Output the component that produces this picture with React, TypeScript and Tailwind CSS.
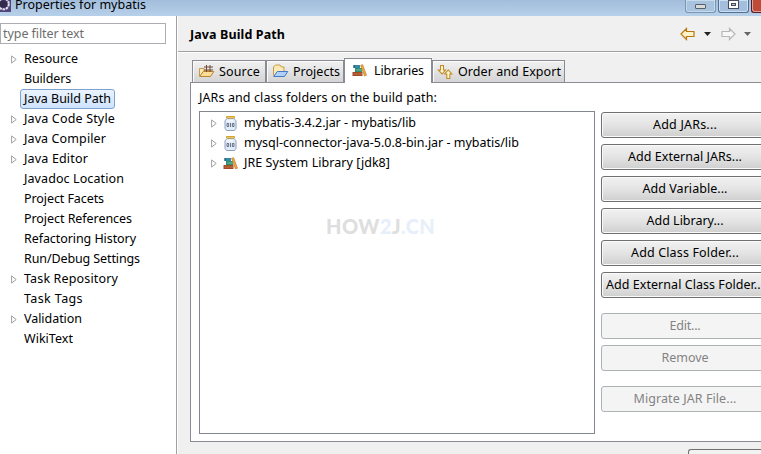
import { useLayoutEffect, useRef, useState } from "react";

function Fit({ text, w, className = "" }: { text: string; w: number; className?: string }) {
  const ref = useRef<HTMLSpanElement>(null);
  const [ls, setLs] = useState(0);
  useLayoutEffect(() => {
    const natural = ref.current!.getBoundingClientRect().width;
    setLs((w - natural) / text.length);
  }, [text, w]);
  return (
    <span ref={ref} className={`inline-block shrink-0 whitespace-pre ${className}`} style={{ letterSpacing: ls }}>
      {text}
    </span>
  );
}

const Expander = () => (
  <svg width="6" height="9" viewBox="0 0 6 9" fill="#fff" stroke="#a0a0a0" className="shrink-0">
    <path d="M.6 .9 5.2 4.5 .6 8.1Z" />
  </svg>
);

const Books = () => (
  <svg width="15" height="13" viewBox="0 0 15 13" className="shrink-0">
    <path d="M1.5 1H8v3H1.5z" fill="#3489a5" /><path d="M1.5 1h1.2v3H1.5z" fill="#225c7b" />
    <path d="M3 4h7v4H3z" fill="#2f8f70" /><path d="M4.5 5.5H10v1H4.5z" fill="#7cc3a0" />
    <path d="M.5 8h10v4H.5z" fill="#a04a27" /><path d="M1.5 9.5H10v1H1.5z" fill="#c87647" />
    <path d="m8.6 1.4 2-.8 3.9 10.6-2 .8z" fill="#f0a63c" stroke="#c07424" strokeWidth=".6" />
  </svg>
);

const Jar = () => (
  <svg width="13" height="16" viewBox="0 0 13 16" className="shrink-0">
    <path d="M3 3.5h7l2 2.3v7.7l-1.5 2h-8L1 13.500V5.800z" fill="#e2ebf8" stroke="#8ea0c0" />
    <path d="M2.500 1.500h8v1.500h-8z" fill="#fbe79c" stroke="#d3a52f" />
    <path d="M3 5.500h6v1H3z" fill="#fff" />
    <path d="M3 8.500h1.600v3H3zM8.400 8.500H10v3H8.400zM6.500 8v4" fill="none" stroke="#4d5871" strokeWidth=".8" />
  </svg>
);

const Folder = ({ source = false }: { source?: boolean }) => (
  <svg width="17" height="16" viewBox="0 0 17 16" className="-mt-[2px] shrink-0">
    <path d={source ? "M1.500 13V5.500H6V8h7" : "M1.500 12.500V4L3.500 2H8l1.500 2H12v4"} fill="#fbeab8" stroke="#c89a45" />
    <path d="m1.700 13.500 3.500-5h10.600l-3.300 5z" fill={source ? "#fbdc98" : "#aed0fa"} stroke={source ? "#bd842e" : "#4878c4"} />
    {source && <path d="M6 4h9M6 7h9M8.500 2v7M12 2v7" stroke="#704a34" />}
  </svg>
);

const Order = () => (
  <svg width="16" height="16" viewBox="0 0 16 16" fill="#fff6cf" stroke="#c18a29" strokeWidth="1.100" className="shrink-0">
    <path d="M3.500 1.500h3V6h2L5 10 1.200 6h2.300z" /><path d="M9.800 14.500h3V10h2L11.300 6 7.600 10h2.200z" />
  </svg>
);

const tree: [string, number, boolean][] = [
  ["Resource", 54, true], ["Builders", 47, false], ["Java Build Path", 87, false],
  ["Java Code Style", 91, true], ["Java Compiler", 82, true], ["Java Editor", 64, true],
  ["Javadoc Location", 100, false], ["Project Facets", 80, false], ["Project References", 108, false],
  ["Refactoring History", 112, false], ["Run/Debug Settings", 116, false], ["Task Repository", 94, true],
  ["Task Tags", 59, false], ["Validation", 58, true], ["WikiText", 49, false],
];

const libs: [string, number, boolean][] = [
  ["mybatis-3.4.2.jar - mybatis/lib", 172, true],
  ["mysql-connector-java-5.0.8-bin.jar - mybatis/lib", 275, true],
  ["JRE System Library [jdk8]", 146, false],
];

const buttons: [string, number, boolean, string][] = [
  ["Add JARs...", 64, true, "mb-[6px]"], ["Add External JARs...", 114, true, "mb-[6px]"],
  ["Add Variable...", 85, true, "mb-[6px]"], ["Add Library...", 77, true, "mb-[6px]"],
  ["Add Class Folder...", 108, true, "mb-[6px]"], ["Add External Class Folder...", 158, true, "mb-[15px]"],
  ["Edit...", 31, false, "mb-[6px]"], ["Remove", 47, false, "mb-[15px]"], ["Migrate JAR File...", 103, false, ""],
];

const tab = "flex h-[22px] items-center border border-b-0 border-[#898c95] bg-linear-to-b from-[#f2f2f2] to-[#d4d4d4] shadow-[inset_1px_1px_0_#fbfbfb]";

export default function App() {
  return (
    <div className="flex h-[454px] w-[761px] flex-col overflow-hidden bg-[#f0f0f0] font-['Noto_Sans',sans-serif] text-[12.5px] leading-[20px] text-black">
      <header className="flex h-4 shrink-0 justify-between overflow-hidden bg-linear-to-b from-[#a2bddb] to-[#b7d0ea]">
        <div className="flex">
          <svg width="11" height="12" viewBox="0 0 11 12" className="mr-1 shrink-0">
            <path d="M0 0h11v12H0z" fill="#51447c" /><circle cx="3.500" cy="4" r="5.300" fill="none" stroke="#e6e2ea" strokeWidth="2" strokeDasharray="2.500 .8" /><circle cx="3.500" cy="4" r="3.800" fill="#352a4c" />
          </svg>
          <Fit text="Properties for mybatis" w={131} className="-mt-[5px]" />
        </div>
        <div className="flex gap-[2px]">
          <div className="flex h-[13px] w-[31px] justify-center rounded-b-[3px] border border-t-0 border-[#7895b5] bg-[#a9c3df] pt-1 shadow-[inset_0_0_0_1px_#c7d9ec]"><i className="h-[5px] w-[11px] rounded-[1px] border border-[#55606e] bg-[#d9d9d9]" /></div>
          <div className="flex h-[13px] w-[31px] justify-center rounded-b-[3px] border border-t-0 border-[#526f91] bg-[#a4bfdd] shadow-[inset_0_0_0_1px_#cbdff2]"><i className="flex h-[9px] w-[11px] items-center justify-center border border-[#484b57] bg-white"><b className="h-[3px] w-[5px] border border-[#484b57] bg-[#b0c6df]" /></i></div>
          <div className="h-[13px] w-[10px] rounded-bl-[3px] border-b border-l border-[#5c1721] bg-[#bd4b37] shadow-[inset_1px_-1px_0_#dda19a]" />
        </div>
      </header>

      <div className="flex min-h-0 flex-1">
        <aside className="w-[177px] shrink-0 border-r border-[#a0a0a0] bg-white pt-[7px]">
          <div className="mb-[5px] h-[21px] w-[166px] border border-[#abadb3] pl-[2px] leading-[19px] text-[#6d6d6d]"><Fit text="type filter text" w={81} /></div>
          {tree.map(([name, w, open]) => (
            <div key={name} className="flex h-5 items-center">
              <span className="ml-[11px] flex w-[9px] items-center">{open && <Expander />}</span>
              <span className={`flex h-5 items-center rounded-[3px] border px-[3px] ${name === "Java Build Path" ? "border-[#7da2ce] bg-linear-to-b from-[#eaf3fd] to-[#cfe3fc]" : "border-transparent"}`}><Fit text={name} w={w} /></span>
            </div>
          ))}
        </aside>

        <main className="flex min-w-0 flex-1 flex-col border-l border-white">
          <div className="flex h-[36px] shrink-0 items-center justify-between border-b border-[#a0a0a0] pr-[9px] pl-[12px]">
            <Fit text="Java Build Path" w={95} className="pt-[3px] font-bold" />
            <svg width="72" height="14" viewBox="0 0 72 14">
              <path d="m1 7 5.500-5.500v3H14v5H6.500v3z" fill="#fff4c8" stroke="#b9780f" strokeWidth="1.200" />
              <path d="M24 5h7l-3.500 4z" fill="#222" />
              <path d="m55 7-5.500-5.500v3H42v5h7.500v3z" fill="#f7f7f7" stroke="#b7b7b7" strokeWidth="1.200" />
              <path d="M64 5h7l-3.500 4z" fill="#666" />
            </svg>
          </div>
          <div className="flex h-[30px] shrink-0 items-end border-t border-white pl-[14px]">
            <div className={`${tab} w-[74px] pl-[5px]`}><Folder source /><Fit text="Source" w={41} className="ml-1" /></div>
            <div className={`${tab} w-[78px] pl-[5px]`}><Folder /><Fit text="Projects" w={47} className="ml-1" /></div>
            <div className="z-1 -mb-px flex h-[25px] w-[88px] items-center border border-b-0 border-[#898c95] bg-white pb-[1px] pl-[7px]"><Books /><Fit text="Libraries" w={50} className="ml-[7px]" /></div>
            <div className={`${tab} w-[133px] pl-[4px]`}><Order /><Fit text="Order and Export" w={103} className="ml-[5px]" /></div>
          </div>
          <section className="ml-[12px] flex h-[360px] shrink-0 flex-col border-y border-l border-[#898c95] bg-white pl-2">
            <div className="h-[28px] shrink-0 pt-[5px]"><Fit text="JARs and class folders on the build path:" w={238} /></div>
            <div className="flex">
              <div className="h-[323px] w-[396px] shrink-0 border border-[#828790] pt-[1px]">
                {libs.map(([name, w, jar]) => (
                  <div key={name} className="flex h-5 items-center pl-[11px]">
                    <Expander />
                    <span className="mr-[6px] ml-[6px] flex w-[15px] justify-center">{jar ? <Jar /> : <Books />}</span>
                    <Fit text={name} w={w} />
                  </div>
                ))}
                <div className="mt-[33px] ml-[126px] flex h-[40px] items-center font-['Lato',sans-serif] text-[20px] font-black text-[#dedede]">
                  <Fit text="HOW" w={54} /><Fit text="2" w={12} className="text-[#e7f0fa]" /><Fit text="J" w={9} /><Fit text=".CN" w={34} className="text-[#e7f0fa]" />
                </div>
              </div>
              <div className="mt-px ml-[6px]">
                {buttons.map(([name, w, on, gap]) => (
                  <div key={name} className={`flex h-[26px] w-[168px] items-center justify-center rounded-[3px] border ${gap} ${on ? "border-[#707070] bg-linear-to-b from-[#f2f2f2] via-[#e4e4e4] to-[#cfcfcf] shadow-[inset_0_0_0_1px_#fafafa]" : "border-[#adb2b5] bg-[#f4f4f4] text-[#838383]"}`}><Fit text={name} w={w} /></div>
                ))}
              </div>
            </div>
          </section>
          <div className="flex justify-end pt-[7px]"><div className="h-[26px] w-[73px] rounded-tl-[3px] border border-r-0 border-[#707070] bg-[#f2f2f2]" /></div>
        </main>
      </div>
    </div>
  );
}
